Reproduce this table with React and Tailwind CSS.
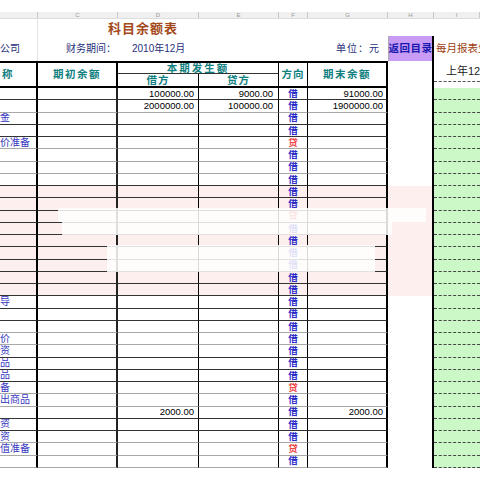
import React from 'react';

const cjk = { fontFamily: '"Liberation Sans", "Noto Sans CJK SC", sans-serif' };

const grid = 'grid grid-cols-[38px_80px_81px_80px_29px_80px_46px_46px]';

// each row: label, opening, debit, credit, direction, closing, dark bottom line
const rows = [
  ['', '', '100000.00', '9000.00', '借', '91000.00', 1],
  ['', '', '2000000.00', '100000.00', '借', '1900000.00', 0],
  ['金', '', '', '', '借', '', 1],
  ['', '', '', '', '借', '', 1],
  ['价准备', '', '', '', '贷', '', 0],
  ['', '', '', '', '借', '', 0],
  ['', '', '', '', '借', '', 0],
  ['', '', '', '', '借', '', 1],
  ['', '', '', '', '借', '', 1],
  ['', '', '', '', '借', '', 1],
  ['', '', '', '', '贷', '', 1],
  ['', '', '', '', '借', '', 1],
  ['', '', '', '', '借', '', 1],
  ['', '', '', '', '借', '', 1],
  ['', '', '', '', '借', '', 1],
  ['', '', '', '', '借', '', 1],
  ['', '', '', '', '借', '', 1],
  ['导', '', '', '', '借', '', 1],
  ['', '', '', '', '借', '', 1],
  ['', '', '', '', '借', '', 0],
  ['价', '', '', '', '借', '', 0],
  ['资', '', '', '', '借', '', 1],
  ['品', '', '', '', '借', '', 1],
  ['品', '', '', '', '借', '', 1],
  ['备', '', '', '', '贷', '', 0],
  ['出商品', '', '', '', '借', '', 0],
  ['', '', '2000.00', '', '借', '2000.00', 1],
  ['资', '', '', '', '借', '', 1],
  ['资', '', '', '', '借', '', 0],
  ['值准备', '', '', '', '贷', '', 0],
  ['', '', '', '', '借', '', 0],
];

const letters = ['', 'C', 'D', 'E', 'F', 'G', 'H', 'I'];

const Row = ({ r, i }) => {
  const [label, open, debit, credit, dir, close, dark] = r;
  const pink = i >= 8 && i <= 16;
  const bg = pink ? 'bg-[#fcefee]' : 'bg-white';
  const line = dark ? 'border-b border-b-[#333]' : 'border-b border-b-[#a8a8a8]';
  const num = 'flex items-center justify-end text-[9.5px] leading-none text-black';
  return (
    <div className={`${grid} h-[12.25px]`}>
      <div className={`${bg} ${line} border-r-2 border-r-black flex items-center overflow-hidden whitespace-nowrap text-[10px] leading-none text-[#3636c0]`}>
        {label}
      </div>
      <div className={`${bg} ${line} border-r-2 border-r-[#222] ${num} pr-[4px]`}>{open}</div>
      <div className={`${bg} ${line} border-r border-r-black ${num} pr-[4px]`}>{debit}</div>
      <div className={`${bg} ${line} border-r border-r-black ${num} pr-[5px]`}>{credit}</div>
      <div
        className={`${bg} ${line} border-r border-r-black flex items-center justify-center text-[9.5px] leading-none font-bold ${
          dir === '贷' ? 'text-[#f0484a]' : 'text-[#2d2dc8]'
        }`}
      >
        {dir}
      </div>
      <div className={`${bg} ${line} border-r-2 border-r-black ${num} pr-[3px]`}>{close}</div>
      <div className={`${bg} border-r-2 border-r-black`} />
      <div className="bg-[#ccf8c8] border-b border-dashed border-b-[#444]" />
    </div>
  );
};

export default function App() {
  return (
    <div className="relative w-[480px] h-[480px] overflow-hidden bg-white" style={cjk}>
      <div className="h-[12px]" />
      <div className={`${grid} h-[7px] bg-[#f0f0f0] border-b border-b-[#dcdcdc]`}>
        {letters.map((l, i) => (
          <div
            key={i}
            className="border-r border-r-[#c8c8c8] flex items-center justify-center text-[6px] leading-none text-[#999]"
          >
            {l}
          </div>
        ))}
      </div>

      {/* title */}
      <div className={`${grid} h-[17px]`}>
        <div className="border-r border-r-[#e4e4e4]" />
        <div className="col-span-7 flex items-center pl-[70px] text-[13px] font-bold tracking-[1px] text-[#a44a1c]">
          科目余额表
        </div>
      </div>

      {/* info row */}
      <div className={`${grid} h-[25px] text-[10px] leading-none text-[#1f2f7a]`}>
        <div className="border-r border-r-[#e4e4e4] flex items-center whitespace-nowrap overflow-hidden">公司</div>
        <div className="flex items-center pl-[28px] whitespace-nowrap">财务期间：</div>
        <div className="flex items-center pl-[14px] whitespace-nowrap">2010年12月</div>
        <div />
        <div />
        <div className="flex items-center pl-[28px] whitespace-nowrap tracking-[1px]">单位：元</div>
        <div className="bg-[#c89cf4] border-l border-l-[#aaa] border-r-2 border-r-black flex items-center justify-center text-[10.5px] font-bold text-[#1818b0] tracking-[0.5px] whitespace-nowrap">
          返回目录
        </div>
        <div className="flex items-center pl-[2px] whitespace-nowrap overflow-hidden text-[#9a3c10] text-[10.5px]">
          每月报表生成
        </div>
      </div>

      {/* header */}
      <div className={`${grid} grid-rows-[13px_14px] h-[27px] text-[10.5px] leading-none font-bold text-[#118080]`}>
        <div className="row-span-2 border-t-2 border-b-2 border-black border-r-2 flex items-center pl-[2px]">称</div>
        <div className="row-span-2 border-t-2 border-b-2 border-black border-r-2 flex items-center justify-center tracking-[1.5px]">
          期初余额
        </div>
        <div className="col-span-2 border-t-2 border-t-black border-b border-b-[#333] border-r border-r-black flex items-center justify-center tracking-[2px]">
          本期发生额
        </div>
        <div className="row-span-2 border-t-2 border-b-2 border-black border-r flex items-center justify-center tracking-[1px]">
          方向
        </div>
        <div className="row-span-2 border-t-2 border-b-2 border-black border-r-2 flex items-center justify-center tracking-[1.5px]">
          期末余额
        </div>
        <div className="row-span-2 border-r-2 border-r-black" />
        <div className="row-span-2 flex flex-col">
          <div className="h-[20px] flex items-center pl-[12px] whitespace-nowrap text-[11px] font-normal text-[#222]">上年12月</div>
          <div className="border-b border-dashed border-b-[#555]" />
          <div className="flex-1" />
        </div>
        <div className="border-b-2 border-b-black border-r border-r-black flex items-center justify-center tracking-[1px]">
          借方
        </div>
        <div className="border-b-2 border-b-black border-r border-r-black flex items-center justify-center tracking-[1px]">
          贷方
        </div>
      </div>

      {rows.map((r, i) => (
        <Row key={i} r={r} i={i} />
      ))}

      {/* washed-out watermark bars */}
      <div className="absolute left-[58px] top-[208px] w-[368px] h-[14px] bg-white/85" />
      <div className="absolute left-[62px] top-[222px] w-[330px] h-[13px] bg-white/85" />
      <div className="absolute left-[107px] top-[245px] w-[268px] h-[27px] bg-white/85" />
    </div>
  );
}
